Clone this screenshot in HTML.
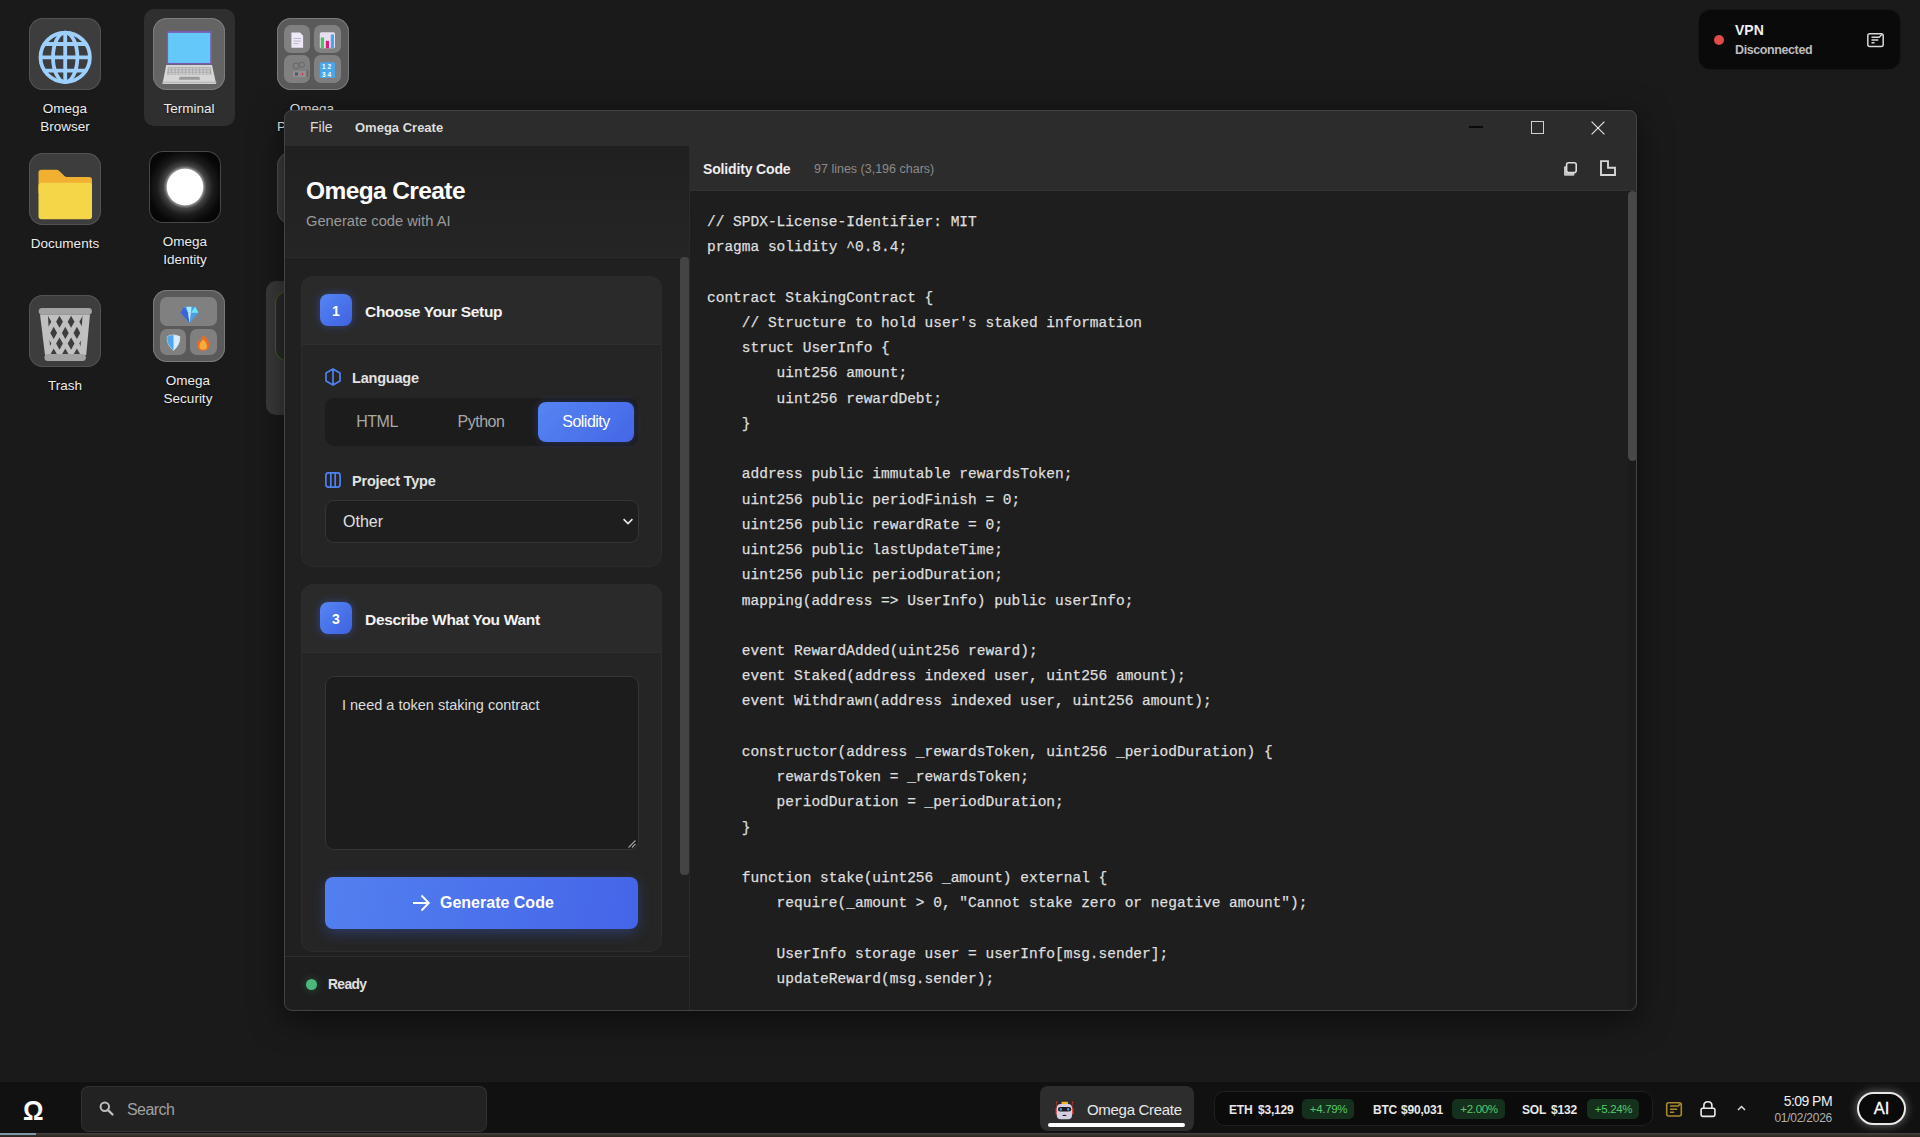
<!DOCTYPE html>
<html><head><meta charset="utf-8">
<style>
*{box-sizing:border-box;margin:0;padding:0}
html,body{width:1920px;height:1137px;overflow:hidden}
body{background:#1a1a1a;font-family:"Liberation Sans",sans-serif;color:#e6e6e6;position:relative}
.abs{position:absolute}
svg{position:absolute;overflow:visible}
/* desktop icons */
.dicon{position:absolute;width:72px;height:72px;border-radius:14px;background:#3d3d3d;box-shadow:inset 0 0 0 1px #525252}
.dlabel{position:absolute;width:120px;text-align:center;font-size:13.5px;line-height:18px;color:#ececec;text-shadow:0 1px 2px rgba(0,0,0,.6)}
.tile{position:absolute;border-radius:7px;background:#808080}
/* window */
#win{position:absolute;left:284px;top:110px;width:1353px;height:901px;border-radius:8px;background:#202020;overflow:hidden;box-shadow:0 8px 32px rgba(0,0,0,.55)}
#winborder{position:absolute;left:284px;top:110px;width:1353px;height:901px;border-radius:8px;border:1px solid #434343;pointer-events:none}
#titlebar{position:absolute;left:0;top:0;width:100%;height:36px;background:#2c2c2c}
#sidebar{position:absolute;left:0;top:36px;width:405px;height:810px;background:#202020}
#status{position:absolute;left:0;top:846px;width:405px;height:55px;background:#1e1e1e;border-top:1px solid #2e2e2e}
#codepanel{position:absolute;left:405px;top:36px;width:948px;height:865px;background:#1e1e1e;border-left:1px solid #2a2a2a}
#codehead{position:absolute;left:0;top:0;width:100%;height:45px;background:#2c2c2c;border-bottom:1px solid #323232}
pre{font-family:"Liberation Mono",monospace;font-size:14.5px;line-height:25.23px;color:#dedede;-webkit-text-stroke:0.25px #dedede;position:absolute;left:18px}
.card{position:absolute;left:17px;width:361px;border-radius:12px;background:#252525;overflow:hidden}
.cardhead{position:absolute;left:0;top:0;width:100%;height:69px;background:#2a2a2a;border-bottom:1px solid #2e2e2e}
.card::after{content:"";position:absolute;left:0;top:0;right:0;bottom:0;border-radius:12px;border:1px solid #2c2c2c;pointer-events:none}
.badge{position:absolute;left:19px;top:18px;width:32px;height:32px;border-radius:8px;background:linear-gradient(135deg,#5585f3,#3f62e2);box-shadow:0 0 10px rgba(70,110,240,.4);color:#fff;font-weight:bold;font-size:14px;text-align:center;line-height:34px}
.cardtitle{position:absolute;left:64px;top:27px;font-size:15.5px;font-weight:bold;color:#f2f2f2;white-space:nowrap;letter-spacing:-0.3px}
.lbl{position:absolute;left:51px;font-size:14.5px;font-weight:bold;color:#e2e2e2;white-space:nowrap;letter-spacing:-0.2px}
.tb{position:absolute;color:#ddd;white-space:nowrap}
.seg{position:absolute;top:4px;width:96px;height:40px;border-radius:8px;text-align:center;line-height:40px;font-size:16px;letter-spacing:-0.5px;color:#a8a8a8}
</style></head>
<body>
<!-- ============ desktop icons ============ -->
<!-- Omega Browser -->
<div class="dicon" style="left:29px;top:18px"></div>
<svg style="left:29px;top:18px" width="72" height="72" viewBox="0 0 72 72">
  <g fill="none" stroke="#9dd0ff" stroke-width="3.8">
    <circle cx="36.2" cy="39.3" r="24.7"/>
    <ellipse cx="36.2" cy="39.3" rx="12.2" ry="24.7"/>
    <line x1="36.2" y1="14.6" x2="36.2" y2="64"/>
    <line x1="12" y1="39.3" x2="60.5" y2="39.3"/>
    <line x1="16" y1="26" x2="56.5" y2="26"/>
    <line x1="16" y1="52.6" x2="56.5" y2="52.6"/>
  </g>
</svg>
<div class="dlabel" style="left:5px;top:100px">Omega<br>Browser</div>

<!-- Terminal (selected) -->
<div class="abs" style="left:144px;top:9px;width:91px;height:117px;border-radius:10px;background:#2f2f2f"></div>
<div class="dicon" style="left:153px;top:18px;background:#646464;box-shadow:inset 0 0 0 1px #7c7c7c"></div>
<svg style="left:153px;top:18px" width="72" height="72" viewBox="0 0 72 72">
  <rect x="13.7" y="12.9" width="45" height="33.5" fill="#7a5db0"/>
  <rect x="15.1" y="14.9" width="42.1" height="30" fill="#64c9f9"/>
  <polygon points="13.2,47 59,47 63.2,65.9 9.5,65.9" fill="#d6d6d6"/>
  <rect x="9.5" y="63.5" width="53.7" height="1.8" fill="#bdbdbd"/>
  <polygon points="15,49.2 57.6,49.2 58.6,56.6 14,56.6" fill="#a8a8a8"/>
  <g fill="#cfcfcf"><rect x="15.60" y="49.90" width="2.6" height="1.5"/><rect x="19.10" y="49.90" width="2.6" height="1.5"/><rect x="22.60" y="49.90" width="2.6" height="1.5"/><rect x="26.10" y="49.90" width="2.6" height="1.5"/><rect x="29.60" y="49.90" width="2.6" height="1.5"/><rect x="33.10" y="49.90" width="2.6" height="1.5"/><rect x="36.60" y="49.90" width="2.6" height="1.5"/><rect x="40.10" y="49.90" width="2.6" height="1.5"/><rect x="43.60" y="49.90" width="2.6" height="1.5"/><rect x="47.10" y="49.90" width="2.6" height="1.5"/><rect x="50.60" y="49.90" width="2.6" height="1.5"/><rect x="54.10" y="49.90" width="2.6" height="1.5"/><rect x="15.60" y="52.25" width="2.6" height="1.5"/><rect x="19.10" y="52.25" width="2.6" height="1.5"/><rect x="22.60" y="52.25" width="2.6" height="1.5"/><rect x="26.10" y="52.25" width="2.6" height="1.5"/><rect x="29.60" y="52.25" width="2.6" height="1.5"/><rect x="33.10" y="52.25" width="2.6" height="1.5"/><rect x="36.60" y="52.25" width="2.6" height="1.5"/><rect x="40.10" y="52.25" width="2.6" height="1.5"/><rect x="43.60" y="52.25" width="2.6" height="1.5"/><rect x="47.10" y="52.25" width="2.6" height="1.5"/><rect x="50.60" y="52.25" width="2.6" height="1.5"/><rect x="54.10" y="52.25" width="2.6" height="1.5"/><rect x="15.60" y="54.60" width="2.6" height="1.5"/><rect x="19.10" y="54.60" width="2.6" height="1.5"/><rect x="22.60" y="54.60" width="2.6" height="1.5"/><rect x="26.10" y="54.60" width="2.6" height="1.5"/><rect x="29.60" y="54.60" width="2.6" height="1.5"/><rect x="33.10" y="54.60" width="2.6" height="1.5"/><rect x="36.60" y="54.60" width="2.6" height="1.5"/><rect x="40.10" y="54.60" width="2.6" height="1.5"/><rect x="43.60" y="54.60" width="2.6" height="1.5"/><rect x="47.10" y="54.60" width="2.6" height="1.5"/><rect x="50.60" y="54.60" width="2.6" height="1.5"/><rect x="54.10" y="54.60" width="2.6" height="1.5"/></g>
  <polygon points="26.6,58.7 46.4,58.7 47,61.8 25.9,61.8" fill="#9a9a9a"/>
</svg>
<div class="dlabel" style="left:129px;top:100px">Terminal</div>

<!-- Omega Productivity (partially hidden) -->
<div class="dicon" style="left:277px;top:18px;background:#5a5a5a;box-shadow:inset 0 0 0 1px #7a7a7a"></div>
<div class="tile" style="left:284px;top:25px;width:26px;height:28px"></div>
<div class="tile" style="left:314px;top:25px;width:27px;height:28px"></div>
<div class="tile" style="left:284px;top:55px;width:26px;height:28px"></div>
<div class="tile" style="left:314px;top:55px;width:27px;height:28px"></div>
<svg style="left:277px;top:18px" width="72" height="72" viewBox="0 0 72 72">
  <path d="M14.4 14.6 H23 L26.1 17.7 V29.8 H14.4 Z" fill="#efe9f7"/>
  <rect x="16.5" y="20" width="7.5" height="0.9" fill="#b9b0c6"/>
  <rect x="16.5" y="22.6" width="7.5" height="0.9" fill="#b9b0c6"/>
  <rect x="16.5" y="25.2" width="5" height="0.9" fill="#b9b0c6"/>
  <rect x="42.8" y="14.2" width="15.2" height="16" rx="1.5" fill="#e6dff0"/>
  <rect x="43.8" y="19.5" width="3.2" height="10.7" fill="#4cc45e"/>
  <rect x="48.8" y="22.8" width="3.2" height="7.4" fill="#e0187e"/>
  <rect x="53.8" y="16.5" width="3.2" height="13.7" fill="#4aa6ea"/>
  <rect x="42.8" y="44.2" width="15.2" height="15.8" rx="1.5" fill="#4aa8ea"/>
  <text x="45" y="51" font-family="Liberation Sans" font-size="6.5" font-weight="bold" fill="#fff">1 2</text>
  <text x="45" y="58.5" font-family="Liberation Sans" font-size="6.5" font-weight="bold" fill="#fff">3 4</text>
  <circle cx="19" cy="48" r="3" fill="none" stroke="#666" stroke-width="1"/>
  <circle cx="24.7" cy="46.8" r="2.7" fill="none" stroke="#666" stroke-width="1"/>
  <rect x="16" y="53" width="13" height="6" fill="#8f8f8f"/>
  <rect x="18" y="54.5" width="3" height="3" fill="#5a4d78"/>
  <rect x="25" y="55" width="1" height="2" fill="#d02040"/>
  <rect x="29.5" y="52" width="2" height="7" fill="#6a6a6a"/>
</svg>
<div class="dlabel" style="left:252px;top:100px">Omega</div>
<div class="dlabel" style="left:252px;top:118px">Productivity</div>

<!-- Documents -->
<div class="dicon" style="left:29px;top:153px"></div>
<svg style="left:29px;top:153px" width="72" height="72" viewBox="0 0 72 72">
  <path d="M9.5 19.8 Q9.5 16.8 12.5 16.8 H27.5 Q29 16.8 30.3 18 L35.5 23 Q36.5 24.1 38 24.1 H60 Q63 24.1 63 27.1 V40 H9.5 Z" fill="#f2b033"/>
  <rect x="9.5" y="29.8" width="53.5" height="36.5" rx="3" fill="#f4d648"/>
</svg>
<div class="dlabel" style="left:5px;top:235px">Documents</div>

<!-- Omega Identity -->
<div class="dicon" style="left:149px;top:151px;width:72px;height:71.5px;background:radial-gradient(circle at 50% 50%,#fff 0,#fff 17.8px,#8a8a8a 18.8px,#444 21.5px,#1c1c1c 28px,#080808 37px,#050505 45px);box-shadow:inset 0 0 0 1px #474747"></div>
<div class="dlabel" style="left:125px;top:233px">Omega<br>Identity</div>

<!-- Trash -->
<div class="dicon" style="left:29px;top:295px"></div>
<svg style="left:29px;top:295px" width="72" height="72" viewBox="0 0 72 72">
  <defs><clipPath id="bk"><polygon points="18.8,19.5 53.6,19.5 51,60 21.6,60"/></clipPath></defs>
  <polygon points="11,19.5 61,19.5 57.2,60 16,60" fill="#c0c0c0"/>
  <g clip-path="url(#bk)" fill="#3d3d3d"><path d="M18.90 20.65 L22.30 26.75 L18.90 32.85 L15.50 26.75Z M30.50 20.65 L33.90 26.75 L30.50 32.85 L27.10 26.75Z M42.10 20.65 L45.50 26.75 L42.10 32.85 L38.70 26.75Z M53.70 20.65 L57.10 26.75 L53.70 32.85 L50.30 26.75Z M24.70 31.80 L28.10 37.90 L24.70 44.00 L21.30 37.90Z M36.30 31.80 L39.70 37.90 L36.30 44.00 L32.90 37.90Z M47.90 31.80 L51.30 37.90 L47.90 44.00 L44.50 37.90Z M18.90 42.50 L22.30 48.60 L18.90 54.70 L15.50 48.60Z M30.50 42.50 L33.90 48.60 L30.50 54.70 L27.10 48.60Z M42.10 42.50 L45.50 48.60 L42.10 54.70 L38.70 48.60Z M53.70 42.50 L57.10 48.60 L53.70 54.70 L50.30 48.60Z M24.70 53.40 L28.10 59.50 L24.70 65.60 L21.30 59.50Z M36.30 53.40 L39.70 59.50 L36.30 65.60 L32.90 59.50Z M47.90 53.40 L51.30 59.50 L47.90 65.60 L44.50 59.50Z"/></g>
  <rect x="9.7" y="12.9" width="53.2" height="6.8" rx="3.4" fill="#a3a3a3"/>
  <rect x="15.4" y="59" width="41.5" height="7" rx="3.5" fill="#a3a3a3"/>
</svg>
<div class="dlabel" style="left:5px;top:377px">Trash</div>

<!-- Omega Security -->
<div class="dicon" style="left:153px;top:290px;background:#5a5a5a;box-shadow:inset 0 0 0 1px #7a7a7a"></div>
<div class="tile" style="left:160px;top:297px;width:57px;height:29px"></div>
<div class="tile" style="left:160px;top:329px;width:26px;height:26px"></div>
<div class="tile" style="left:190px;top:329px;width:27px;height:26px"></div>
<svg style="left:153px;top:290px" width="72" height="72" viewBox="0 0 72 72">
  <polygon points="27.5,22.8 31,16.8 42.2,16.8 45.5,22.8 36.5,33" fill="#4e9ce8"/>
  <polygon points="27.5,22.8 31,16.8 35,22.8 36.5,33" fill="#3a64d8"/>
  <polygon points="42.2,16.8 45.5,22.8 38,22.8" fill="#6ee6fa"/>
  <polygon points="35,22.8 38,22.8 36.5,33" fill="#c8e6ff"/>
  <polygon points="33.5,16.8 38.5,16.8 38,22.8 35,22.8" fill="#a8ecff"/>
  <path d="M20.5 44.9 Q17 45.2 14.2 46.6 Q13.6 55 20.5 60.4 Q27.2 55 26.8 46.6 Q24 45.2 20.5 44.9 Z" fill="#d8ecff" stroke="#eef6ff" stroke-width="0.6"/>
  <path d="M20.5 44.9 Q17 45.2 14.2 46.6 Q13.6 55 20.5 60.4 Z" fill="#4ea6ee"/>
  <path d="M50 44.9 Q55.8 49 56.2 54.5 Q56.2 60.7 50 60.7 Q44 60.7 44.2 54.8 Q44.5 51.5 46.5 49.5 L47.3 52 Q48 47.5 50 44.9 Z" fill="#ee6a22"/>
  <path d="M50.2 49.5 Q54 53 54 56.2 Q54 59.8 50.2 59.8 Q46.4 59.8 46.4 56.2 Q46.4 53 50.2 49.5 Z" fill="#f4ac3a"/>
</svg>
<div class="dlabel" style="left:128px;top:372px">Omega<br>Security</div>

<!-- hidden third-column icons behind window -->
<div class="dicon" style="left:277px;top:152px"></div>
<div class="abs" style="left:266px;top:281px;width:60px;height:134px;border-radius:10px;background:#3a3a3a"></div>
<div class="abs" style="left:275px;top:291px;width:40px;height:70px;border-radius:12px;border:1px solid #3f6a1a;background:#2a2a2a"></div>

<!-- ============ window ============ -->
<div id="win">
  <div id="titlebar">
    <div class="tb" style="left:26px;top:9px;font-size:14px">File</div>
    <div class="tb" style="left:71px;top:10px;font-size:13px;font-weight:bold">Omega Create</div>
    <div class="abs" style="left:1185px;top:16px;width:14px;height:1.5px;background:#0a0a0a"></div>
    <div class="abs" style="left:1247px;top:11px;width:12.5px;height:12.5px;border:1.2px solid #d0d0d0"></div>
    <svg style="left:1307px;top:11px" width="14" height="14" viewBox="0 0 14 14"><path d="M0.6 0.6 L13.4 13.4 M13.4 0.6 L0.6 13.4" stroke="#e0e0e0" stroke-width="1.2"/></svg>
  </div>
  <div id="sidebar">
    <div class="abs" style="left:0;top:0;width:100%;height:111px;background:linear-gradient(180deg,#202020,#252525)"></div>
    <div class="abs" style="left:22px;top:31px;font-size:24.5px;font-weight:bold;color:#fff;letter-spacing:-0.6px;white-space:nowrap">Omega Create</div>
    <div class="abs" style="left:22px;top:67px;font-size:14.7px;color:#9a9a9a;white-space:nowrap">Generate code with AI</div>
    <div class="abs" style="left:0;top:111px;width:100%;height:1px;background:#2a2a2a"></div>
    <!-- card 1 -->
    <div class="card" style="top:130px;height:291px">
      <div class="cardhead"></div>
      <div class="badge">1</div>
      <div class="cardtitle">Choose Your Setup</div>
      <svg style="left:24px;top:92px" width="16" height="18" viewBox="0 0 16 18"><path d="M8 0.9 L15 4.9 V13.1 L8 17.1 L1 13.1 V4.9 Z M8 0.9 V17.1" fill="none" stroke="#4f80f2" stroke-width="1.7" stroke-linejoin="round"/></svg>
      <div class="lbl" style="top:94px">Language</div>
      <div class="abs" style="left:24px;top:122px;width:313px;height:48px;border-radius:9px;background:#1c1c1c">
        <div class="seg" style="left:4px">HTML</div>
        <div class="seg" style="left:108px">Python</div>
        <div class="seg" style="left:213px;color:#fff;background:linear-gradient(135deg,#5585f3,#4566e6);box-shadow:0 0 8px rgba(60,100,230,.35)">Solidity</div>
      </div>
      <svg style="left:24px;top:196px" width="16" height="16" viewBox="0 0 16 16"><rect x="0.9" y="0.9" width="14.2" height="14.2" rx="2.5" fill="none" stroke="#4f80f2" stroke-width="1.7"/><path d="M5.8 1 V15 M10.2 1 V15" stroke="#4f80f2" stroke-width="1.7"/></svg>
      <div class="lbl" style="top:197px">Project Type</div>
      <div class="abs" style="left:24px;top:224px;width:314px;height:43px;border-radius:9px;background:#1e1e1e;border:1px solid #363636">
        <div class="abs" style="left:17px;top:12px;font-size:16px;color:#e0e0e0">Other</div>
        <svg style="left:297px;top:17px" width="10" height="7" viewBox="0 0 10 7"><path d="M0.6 1.2 L5 5.6 L9.4 1.2" fill="none" stroke="#e2e2e2" stroke-width="1.7"/></svg>
      </div>
    </div>
    <!-- card 3 -->
    <div class="card" style="top:438px;height:368px">
      <div class="cardhead"></div>
      <div class="badge">3</div>
      <div class="cardtitle">Describe What You Want</div>
      <div class="abs" style="left:24px;top:92px;width:314px;height:174px;border-radius:9px;background:#1c1c1c;border:1px solid #363636">
        <div class="abs" style="left:16px;top:20px;font-size:14.5px;color:#dcdcdc;white-space:nowrap">I need a token staking contract</div>
        <svg style="left:302px;top:163px" width="8" height="8" viewBox="0 0 8 8"><path d="M7.5 0.5 L0.5 7.5 M7.5 4 L4 7.5" stroke="#a0a0a0" stroke-width="1.1"/></svg>
      </div>
      <div class="abs" style="left:24px;top:293px;width:313px;height:52px;border-radius:8px;background:linear-gradient(100deg,#5280f0,#4565e8);box-shadow:0 4px 14px rgba(60,100,230,.35)">
        <svg style="left:87px;top:17px" width="18" height="18" viewBox="0 0 18 18"><path d="M1 9 H16.5 M9.5 1.5 L16.8 9 L9.5 16.5" fill="none" stroke="#fff" stroke-width="1.9"/></svg>
        <div class="abs" style="left:115px;top:17px;font-size:16px;font-weight:bold;color:#fff;white-space:nowrap">Generate Code</div>
      </div>
    </div>
    <div class="abs" style="left:396px;top:111px;width:8.5px;height:618px;border-radius:4px;background:#444"></div>
  </div>
  <div id="status">
    <div class="abs" style="left:22px;top:22px;width:11px;height:11px;border-radius:50%;background:#4cb77c;box-shadow:0 0 8px rgba(76,183,124,.35)"></div>
    <div class="abs" style="left:44px;top:20px;font-size:13.8px;font-weight:bold;color:#e0e0e0;letter-spacing:-0.6px">Ready</div>
  </div>
  <div id="codepanel">
    <div id="codehead">
      <div class="abs" style="left:13px;top:15px;font-size:14px;font-weight:bold;color:#eee;letter-spacing:-0.15px;white-space:nowrap">Solidity Code</div>
      <div class="abs" style="left:124px;top:16px;font-size:12.5px;color:#8a8a8a;white-space:nowrap">97 lines (3,196 chars)</div>
      <svg style="left:873px;top:15px" width="16" height="16" viewBox="0 0 16 16"><rect x="1" y="5.2" width="10.4" height="9.6" rx="1" fill="#c4c4c4"/><rect x="3.6" y="1.8" width="9.6" height="9.8" rx="2" fill="#2c2c2c" stroke="#dcdcdc" stroke-width="1.6"/></svg>
      <svg style="left:910px;top:14px" width="17" height="17" viewBox="0 0 17 17"><path d="M1 1.1 H8 V7.8 H15 V15 H1 Z" fill="none" stroke="#d6d6d6" stroke-width="1.9"/></svg>
    </div>
    <div class="abs" style="left:938px;top:45px;width:9px;height:820px;background:#1b1b1b"></div>
    <div class="abs" style="left:938px;top:45px;width:9px;height:270px;border-radius:4.5px;background:#484848"></div>
    <pre style="top:64px;left:17px">// SPDX-License-Identifier: MIT
pragma solidity ^0.8.4;

contract StakingContract {
    // Structure to hold user's staked information
    struct UserInfo {
        uint256 amount;
        uint256 rewardDebt;
    }

    address public immutable rewardsToken;
    uint256 public periodFinish = 0;
    uint256 public rewardRate = 0;
    uint256 public lastUpdateTime;
    uint256 public periodDuration;
    mapping(address => UserInfo) public userInfo;

    event RewardAdded(uint256 reward);
    event Staked(address indexed user, uint256 amount);
    event Withdrawn(address indexed user, uint256 amount);

    constructor(address _rewardsToken, uint256 _periodDuration) {
        rewardsToken = _rewardsToken;
        periodDuration = _periodDuration;
    }

    function stake(uint256 _amount) external {
        require(_amount > 0, "Cannot stake zero or negative amount");

        UserInfo storage user = userInfo[msg.sender];
        updateReward(msg.sender);</pre>
  </div>
</div>
<div id="winborder"></div>

<!-- ============ VPN widget ============ -->
<div class="abs" style="left:1699px;top:10px;width:201px;height:59px;border-radius:12px;background:#0a0a0a;box-shadow:0 0 0 1px #151515">
  <div class="abs" style="left:15px;top:25px;width:10px;height:10px;border-radius:50%;background:#e04a4a"></div>
  <div class="abs" style="left:36px;top:12px;font-size:14px;font-weight:bold;color:#f0f0f0">VPN</div>
  <div class="abs" style="left:36px;top:33px;font-size:12.5px;font-weight:bold;color:#bdbdbd;letter-spacing:-0.4px">Disconnected</div>
  <svg style="left:168px;top:23px" width="17" height="14" viewBox="0 0 17 14"><rect x="0.8" y="0.8" width="15.4" height="12.6" rx="2" fill="none" stroke="#d8d8d8" stroke-width="1.5"/><path d="M4.5 4.2 H12.2 L14.8 1.6 M4.5 7 H11.3 M4.5 9.8 H7.5" fill="none" stroke="#d8d8d8" stroke-width="1.4"/></svg>
</div>

<!-- ============ taskbar ============ -->
<div class="abs" style="left:0;top:1081px;width:1920px;height:52px;background:#111"></div>
<div class="abs" style="left:0;top:1081px;width:1920px;height:1px;background:#1c1c1c"></div>
<div class="abs" style="left:0;top:1133px;width:1920px;height:4px;background:linear-gradient(180deg,#4a4644 0,#3a332d 40%,#2e261f 100%)"></div><div class="abs" style="left:0;top:1133px;width:36px;height:2px;background:#7a98a8"></div>
<div class="abs" style="left:23px;top:1095px;font-size:27.5px;font-weight:bold;color:#fff;font-family:'Liberation Sans',sans-serif;transform:scaleX(0.93);transform-origin:0 0">&#937;</div>
<div class="abs" style="left:81px;top:1086px;width:406px;height:46px;border-radius:8px;background:#222;box-shadow:inset 0 0 0 1px #303030">
  <svg style="left:18px;top:15px" width="15" height="15" viewBox="0 0 15 15"><circle cx="5.8" cy="5.8" r="4.2" fill="none" stroke="#bdbdbd" stroke-width="2"/><path d="M8.8 8.8 L13.5 13.5" stroke="#bdbdbd" stroke-width="2.4" stroke-linecap="round"/></svg>
  <div class="abs" style="left:46px;top:15px;font-size:16px;color:#a0a0a0;letter-spacing:-0.55px">Search</div>
</div>
<!-- app button -->
<div class="abs" style="left:1040px;top:1086px;width:154px;height:45px;border-radius:8px;background:#2d2d2d">
  <svg style="left:15px;top:14px" width="20" height="20" viewBox="0 0 20 20">
    <path d="M1.5 2.3 V13 M17.5 2.3 V13" stroke="#c03030" stroke-width="0.6"/>
    <rect x="0.6" y="8" width="1.6" height="6.5" rx="0.8" fill="#e04a4a"/>
    <rect x="16.8" y="8" width="1.6" height="6.5" rx="0.8" fill="#e04a4a"/>
    <circle cx="1.5" cy="2.3" r="0.8" fill="#e83030"/><circle cx="17.5" cy="2.3" r="0.8" fill="#e83030"/>
    <rect x="6.5" y="1.8" width="6.5" height="2.4" rx="0.6" fill="#f0b030"/>
    <rect x="1.8" y="4" width="15.2" height="15.2" rx="4" fill="#d6cfe2"/>
    <rect x="3" y="6.9" width="13.2" height="4.7" rx="2.3" fill="#1c1c1c"/>
    <ellipse cx="5.8" cy="9.25" rx="1.1" ry="1.6" fill="#4aa0e8"/><ellipse cx="13.2" cy="9.25" rx="1.1" ry="1.6" fill="#4aa0e8"/>
    <ellipse cx="9.5" cy="15.4" rx="2.1" ry="0.7" fill="#222"/>
  </svg>
  <div class="abs" style="left:47px;top:15px;font-size:15px;color:#e8e8e8;white-space:nowrap;letter-spacing:-0.3px">Omega Create</div>
  <div class="abs" style="left:8px;top:37px;width:137px;height:4px;border-radius:2px;background:#fff"></div>
</div>
<!-- crypto ticker -->
<div class="abs" style="left:1214px;top:1091px;width:439px;height:35px;border-radius:10px;background:#0b0b0b;box-shadow:inset 0 0 0 1px #1f1f1f">
  <div class="abs" style="left:15px;top:12px;font-size:12px;font-weight:bold;color:#e8e8e8;white-space:nowrap;letter-spacing:-0.2px">ETH</div>
  <div class="abs" style="left:44px;top:12px;font-size:12px;font-weight:bold;color:#e8e8e8;white-space:nowrap;letter-spacing:-0.2px">$3,129</div>
  <div class="abs" style="left:88px;top:8px;width:52px;height:20px;border-radius:5px;background:#15301c"></div>
  <div class="abs" style="left:88px;top:12px;width:52px;text-align:center;font-size:11.5px;color:#58c96a;letter-spacing:-0.3px;padding-left:1px">+4.79%</div>
  <div class="abs" style="left:159px;top:12px;font-size:12px;font-weight:bold;color:#e8e8e8;white-space:nowrap;letter-spacing:-0.2px">BTC</div>
  <div class="abs" style="left:187px;top:12px;font-size:12px;font-weight:bold;color:#e8e8e8;white-space:nowrap;letter-spacing:-0.2px">$90,031</div>
  <div class="abs" style="left:238px;top:8px;width:53px;height:20px;border-radius:5px;background:#15301c"></div>
  <div class="abs" style="left:238px;top:12px;width:53px;text-align:center;font-size:11.5px;color:#58c96a;letter-spacing:-0.3px;padding-left:1px">+2.00%</div>
  <div class="abs" style="left:308px;top:12px;font-size:12px;font-weight:bold;color:#e8e8e8;white-space:nowrap;letter-spacing:-0.2px">SOL</div>
  <div class="abs" style="left:337px;top:12px;font-size:12px;font-weight:bold;color:#e8e8e8;white-space:nowrap;letter-spacing:-0.2px">$132</div>
  <div class="abs" style="left:373px;top:8px;width:52px;height:20px;border-radius:5px;background:#15301c"></div>
  <div class="abs" style="left:373px;top:12px;width:52px;text-align:center;font-size:11.5px;color:#58c96a;letter-spacing:-0.3px;padding-left:1px">+5.24%</div>
</div>
<!-- tray -->
<svg style="left:1665px;top:1101px" width="18" height="16" viewBox="0 0 18 16"><rect x="1.7" y="1.8" width="14.6" height="13.2" rx="2" fill="none" stroke="#a98a2a" stroke-width="1.6"/><path d="M5 5 H13.2 L15.6 2.6 M5 8.2 H12.2 M5 11.3 H9.2" fill="none" stroke="#a98a2a" stroke-width="1.6"/></svg>
<svg style="left:1700px;top:1100px" width="16" height="18" viewBox="0 0 16 18"><path d="M3.9 8.2 V5.5 Q3.9 1.8 7.9 1.8 Q11.9 1.8 11.9 5.5 V8.2" fill="none" stroke="#ececec" stroke-width="1.6"/><rect x="1.1" y="8.2" width="13.8" height="8.2" rx="1.6" fill="none" stroke="#ececec" stroke-width="1.6"/></svg>
<svg style="left:1737px;top:1105px" width="9" height="6" viewBox="0 0 9 6"><path d="M1 5 L4.5 1.5 L8 5" fill="none" stroke="#ddd" stroke-width="1.5"/></svg>
<div class="abs" style="left:1760px;top:1093px;width:72px;text-align:right;font-size:14px;color:#f0f0f0;white-space:nowrap;letter-spacing:-0.55px">5:09 PM</div>
<div class="abs" style="left:1760px;top:1111px;width:72px;text-align:right;font-size:12px;color:#b0b0b0;white-space:nowrap;letter-spacing:-0.25px">01/02/2026</div>
<div class="abs" style="left:1857px;top:1092px;width:49px;height:33px;border-radius:17px;background:#0a0a0a;border:2px solid #e8e8e8;box-shadow:0 0 10px rgba(255,255,255,.4);text-align:center;line-height:29px;font-size:16.5px;color:#fff;-webkit-text-stroke:0.3px #fff">AI</div>
</body></html>
